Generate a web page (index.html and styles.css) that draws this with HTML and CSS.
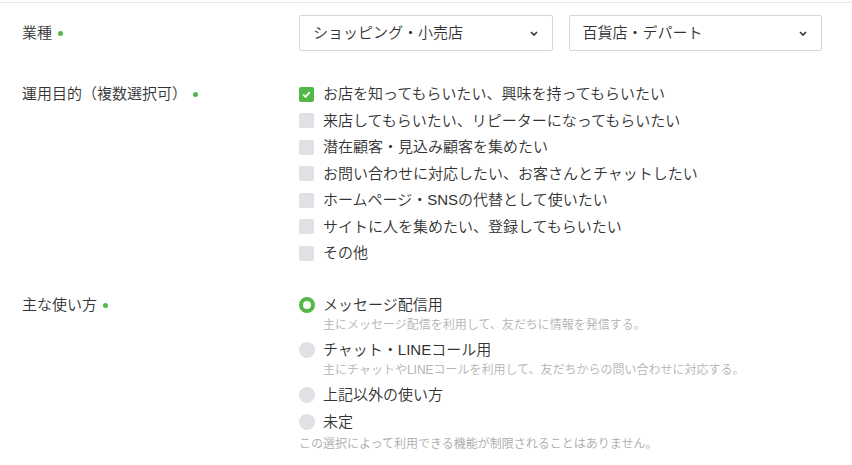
FILE: index.html
```html
<!DOCTYPE html>
<html lang="ja">
<head>
<meta charset="utf-8">
<link rel="stylesheet" href="styles.css">
</head>
<body>
<div class="form">
  <div class="row row-select">
    <div class="label label-select">業種<span class="req"></span></div>
    <div class="field selects">
      <div class="select"><span>ショッピング・小売店</span><svg class="chev" width="8" height="5" viewBox="0 0 8 5"><path d="M1 1 L4 4 L7 1" fill="none" stroke="#333" stroke-width="1.6"/></svg></div>
      <div class="select"><span>百貨店・デパート</span><svg class="chev" width="8" height="5" viewBox="0 0 8 5"><path d="M1 1 L4 4 L7 1" fill="none" stroke="#333" stroke-width="1.6"/></svg></div>
    </div>
  </div>

  <div class="row row-check">
    <div class="label">運用目的（複数選択可）<span class="req"></span></div>
    <div class="field checks">
      <div class="opt"><span class="cb checked"><svg width="9" height="7" viewBox="0 0 9 7"><path d="M1.2 3.6 L3.5 5.8 L7.8 1.2" fill="none" stroke="#fff" stroke-width="1.8"/></svg></span>お店を知ってもらいたい、興味を持ってもらいたい</div>
      <div class="opt"><span class="cb"></span>来店してもらいたい、リピーターになってもらいたい</div>
      <div class="opt"><span class="cb"></span>潜在顧客・見込み顧客を集めたい</div>
      <div class="opt"><span class="cb"></span>お問い合わせに対応したい、お客さんとチャットしたい</div>
      <div class="opt"><span class="cb"></span>ホームページ・SNSの代替として使いたい</div>
      <div class="opt"><span class="cb"></span>サイトに人を集めたい、登録してもらいたい</div>
      <div class="opt"><span class="cb"></span>その他</div>
    </div>
  </div>

  <div class="row row-radio">
    <div class="label">主な使い方<span class="req"></span></div>
    <div class="field radios">
      <div class="ropt">
        <div class="opt"><span class="rb on"></span>メッセージ配信用</div>
        <div class="desc">主にメッセージ配信を利用して、友だちに情報を発信する。</div>
      </div>
      <div class="ropt">
        <div class="opt"><span class="rb"></span>チャット・LINEコール用</div>
        <div class="desc">主にチャットやLINEコールを利用して、友だちからの問い合わせに対応する。</div>
      </div>
      <div class="ropt">
        <div class="opt"><span class="rb"></span>上記以外の使い方</div>
      </div>
      <div class="ropt">
        <div class="opt"><span class="rb"></span>未定</div>
      </div>
      <div class="note">この選択によって利用できる機能が制限されることはありません。</div>
    </div>
  </div>
</div>
</body>
</html>
```

FILE: styles.css
```css
* { box-sizing: border-box; }
html, body { margin: 0; padding: 0; background: #fff; }
body {
  font-family: "Liberation Sans", "Noto Sans CJK JP", sans-serif;
  color: #333;
  font-size: 15px;
  font-weight: 350;
}
.form {
  margin-top: 2px;
  border-top: 1px solid #e6e6e6;
  padding: 12px 30px 0 22px;
}
.row {
  display: grid;
  grid-template-columns: 277px 1fr;
}
.row-check { margin-top: 32px; }
.row-radio { margin-top: 30px; }
.label {
  line-height: 22px;
  display: flex;
  align-items: center;
  height: 22px;
}
.label-select { height: 36px; line-height: 36px; }
.req {
  width: 5px;
  height: 5px;
  border-radius: 50%;
  background: #52b848;
  margin-left: 6px;
  flex: none;
}
.selects {
  display: flex;
  gap: 16px;
}
.select {
  flex: 1;
  height: 36px;
  border: 1px solid #d6d6d6;
  border-radius: 2px;
  display: flex;
  align-items: center;
  justify-content: space-between;
  padding: 0 14px 0 13px;
  line-height: 34px;
}
.chev { display: block; }
.checks {
  display: flex;
  flex-direction: column;
  gap: 4.5px;
}
.opt {
  display: flex;
  align-items: center;
  line-height: 22px;
  height: 22px;
}
.cb {
  width: 15px;
  height: 15px;
  border-radius: 2px;
  background: #dfe1e5;
  margin-right: 9px;
  flex: none;
  display: flex;
  align-items: center;
  justify-content: center;
}
.cb.checked { background: #52b848; }
.cb svg { display: block; }
.radios {
  display: flex;
  flex-direction: column;
  gap: 5px;
}
.rb {
  width: 16px;
  height: 16px;
  border-radius: 50%;
  background: #dfe1e5;
  margin-right: 8px;
  flex: none;
}
.rb.on {
  background: #fff;
  border: 4px solid #52b848;
}
.desc {
  font-size: 12px;
  line-height: 18px;
  color: #b3b3b3;
  padding-left: 24px;
}
.note {
  font-size: 12px;
  line-height: 18px;
  color: #aaa;
  margin-top: -3px;
}
```
